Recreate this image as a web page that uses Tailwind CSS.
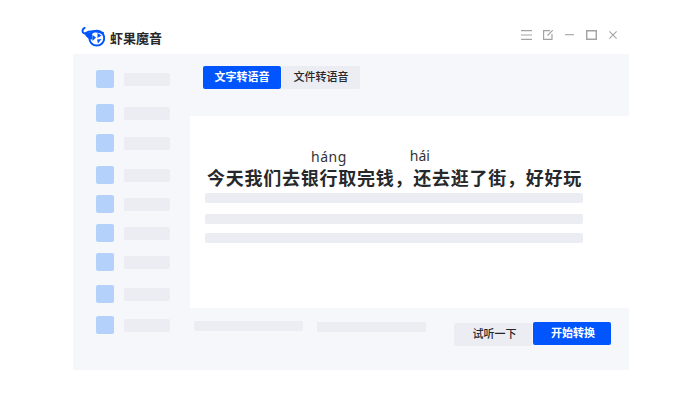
<!DOCTYPE html>
<html lang="zh-CN">
<head>
  <meta charset="UTF-8" />
  <title>虾果魔音</title>
  <script src="https://cdn.jsdelivr.net/npm/@tailwindcss/browser@4"></script>
</head>
<body class="bg-white w-[700px] h-[400px] overflow-hidden font-['Noto_Sans','Noto_Sans_CJK_SC',sans-serif] text-[#26282c]">
  <!-- title bar -->
  <header class="h-[54px] pl-[81px] pr-[83px] flex items-start justify-between">
    <div class="flex items-start gap-[5px] mt-[27px]">
      <svg width="24" height="20" viewBox="0 0 24 20" fill="none">
        <path d="M3.5 .8 C.8 2.5 .8 5.5 3.5 6.5 C8 3.8 15 3.6 22 6" stroke="#0055ff" stroke-width="2" stroke-linecap="round" stroke-linejoin="round"/>
        <path d="M3.5 6.5 L11 5 L11.5 12.5 C8 12.5 5 10.5 3.5 6.5 Z" fill="#0055ff"/>
        <circle cx="15.8" cy="11.2" r="7.4" stroke="#0055ff" stroke-width="2"/>
        <path d="M11.5 8 L15 10.5 L11.5 14 Z M16.5 6 L20.5 8.5 L16.5 11 Z M16 12.5 L20.5 12 L17 16.5 Z" fill="#0055ff"/>
      </svg>
      <span class="text-[13px] leading-[18px] font-bold mt-[2px]">虾果魔音</span>
    </div>
    <div class="flex items-start mt-[30px]">
      <svg width="11" height="10" viewBox="0 0 11 10" fill="none" stroke="#a3a3a3" stroke-width="1.1"><path d="M0 .6 H11 M0 5 H11 M0 9.4 H11"/></svg>
      <svg class="ml-[11px]" width="10" height="10" viewBox="0 0 10 10" fill="none" stroke="#a3a3a3" stroke-width="1.2"><path d="M7 .6 H.6 V9.4 H9 V4 M4.5 5.5 L9.8 .2"/></svg>
      <svg class="ml-[12px]" width="9" height="10" viewBox="0 0 9 10" fill="none" stroke="#a3a3a3" stroke-width="1.1"><path d="M0 4.7 H9"/></svg>
      <svg class="ml-[12px]" width="11" height="10" viewBox="0 0 11 10" fill="none" stroke="#a3a3a3" stroke-width="1.4"><path d="M.7 .7 H10.3 V9.3 H.7 Z"/></svg>
      <svg class="ml-[12px] mt-[1px]" width="8" height="8" viewBox="0 0 8 8" fill="none" stroke="#a3a3a3" stroke-width="1.1"><path d="M.4 .4 L7.6 7.6 M7.6 .4 L.4 7.6"/></svg>
    </div>
  </header>

  <div class="ml-[73px] w-[556px] h-[316px] bg-[#f5f7fa] flex">
    <!-- sidebar -->
    <aside class="w-[117px] pl-[23px] shrink-0">
      <div class="flex items-center gap-[10px] mt-[16px]"><i class="w-[18px] h-[18px] rounded-[2px] bg-[#b3d1fb]"></i><i class="w-[46px] h-[13px] rounded-[2px] bg-[#ebedf2]"></i></div>
      <div class="flex items-center gap-[10px] mt-[16px]"><i class="w-[18px] h-[18px] rounded-[2px] bg-[#b3d1fb]"></i><i class="w-[46px] h-[13px] rounded-[2px] bg-[#ebedf2] mt-[1px]"></i></div>
      <div class="flex items-center gap-[10px] mt-[12px]"><i class="w-[18px] h-[18px] rounded-[2px] bg-[#b3d1fb]"></i><i class="w-[46px] h-[13px] rounded-[2px] bg-[#ebedf2] mt-[1px]"></i></div>
      <div class="flex items-center gap-[10px] mt-[14px]"><i class="w-[18px] h-[18px] rounded-[2px] bg-[#b3d1fb]"></i><i class="w-[46px] h-[13px] rounded-[2px] bg-[#ebedf2] mt-[1px]"></i></div>
      <div class="flex items-center gap-[10px] mt-[11px]"><i class="w-[18px] h-[18px] rounded-[2px] bg-[#b3d1fb]"></i><i class="w-[46px] h-[13px] rounded-[2px] bg-[#ebedf2] mt-[1px]"></i></div>
      <div class="flex items-center gap-[10px] mt-[11px]"><i class="w-[18px] h-[18px] rounded-[2px] bg-[#b3d1fb]"></i><i class="w-[46px] h-[13px] rounded-[2px] bg-[#ebedf2] mt-[1px]"></i></div>
      <div class="flex items-center gap-[10px] mt-[11px]"><i class="w-[18px] h-[18px] rounded-[2px] bg-[#b3d1fb]"></i><i class="w-[46px] h-[13px] rounded-[2px] bg-[#ebedf2] mt-[1px]"></i></div>
      <div class="flex items-center gap-[10px] mt-[14px]"><i class="w-[18px] h-[18px] rounded-[2px] bg-[#b3d1fb]"></i><i class="w-[46px] h-[13px] rounded-[2px] bg-[#ebedf2]"></i></div>
      <div class="flex items-center gap-[10px] mt-[13px]"><i class="w-[18px] h-[18px] rounded-[2px] bg-[#b3d1fb]"></i><i class="w-[46px] h-[13px] rounded-[2px] bg-[#ebedf2] mt-[1px]"></i></div>
    </aside>

    <div class="flex-1 flex flex-col">
      <!-- tabs -->
      <div class="h-[62px] pl-[13px] pt-[12px] flex items-start gap-[1px]">
        <div class="w-[78px] h-[23px] rounded-[2px] bg-[#0055ff] text-white text-[11px] font-bold flex items-center justify-center">文字转语音</div>
        <div class="w-[78px] h-[23px] rounded-[2px] bg-[#ebedf2] text-[11px] font-medium flex items-center justify-center">文件转语音</div>
      </div>

      <!-- editor -->
      <main class="h-[192px] bg-white pl-[15px]">
        <div class="flex text-[14px] leading-[20px] text-[#333] pt-[30px] h-[49px]">
          <span class="ml-[106px] mt-[1px] tracking-[0.5px]">háng</span>
          <span class="ml-[63px]">hái</span>
        </div>
        <p class="text-[18px] tracking-[0.75px] leading-[26px] font-bold whitespace-nowrap ml-[2px]">今天我们去银行取完钱，还去逛了街，好好玩</p>
        <div class="mt-[2px] w-[378px] h-[10px] rounded-[2px] bg-[#ebedf2]"></div>
        <div class="mt-[11px] w-[378px] h-[10px] rounded-[2px] bg-[#ebedf2]"></div>
        <div class="mt-[9px] w-[378px] h-[10px] rounded-[2px] bg-[#ebedf2]"></div>
      </main>

      <!-- footer -->
      <div class="flex-1 pl-[4px] flex items-start">
        <div class="mt-[13px] w-[109px] h-[10px] rounded-[2px] bg-[#ebedf2]"></div>
        <div class="mt-[14px] ml-[14px] w-[109px] h-[10px] bg-[#ebedf2]"></div>
        <div class="mt-[15px] ml-[28px] w-[78px] h-[23px] pl-[3px] rounded-[2px] bg-[#ebedf2] text-[11px] font-medium flex items-center justify-center">试听一下</div>
        <div class="mt-[14px] ml-[1px] w-[78px] h-[23px] pl-[2px] rounded-[2px] bg-[#0055ff] text-white text-[11px] font-bold flex items-center justify-center">开始转换</div>
      </div>
    </div>
  </div>
</body>
</html>
